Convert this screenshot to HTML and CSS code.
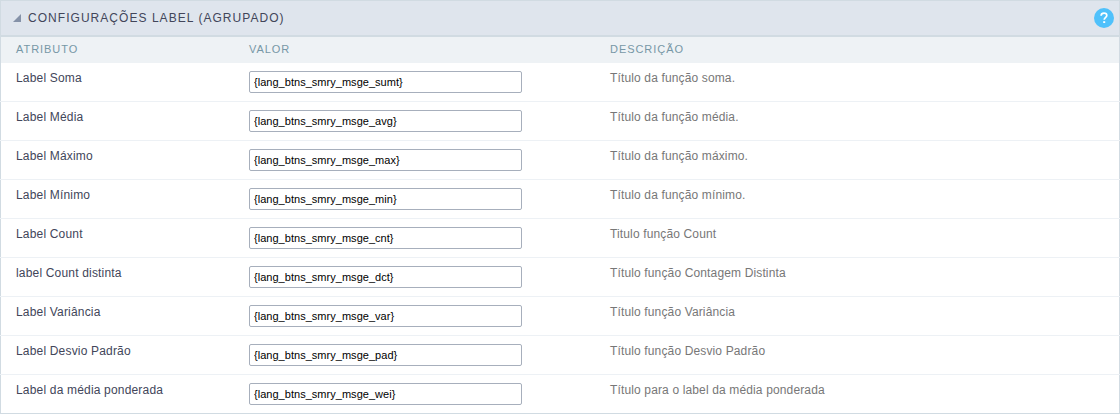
FILE: index.html
```html
<!DOCTYPE html>
<html lang="pt-BR">
<head>
<meta charset="utf-8">
<title>Configurações Label</title>
<link rel="stylesheet" href="styles.css">
</head>
<body>
<section class="panel">
  <header class="panel-head">
    <svg class="toggle" width="8" height="8" viewBox="0 0 8 8"><path d="M8 0V8H0Z"/></svg>
    <h1 class="title">CONFIGURAÇÕES LABEL (AGRUPADO)</h1>
    <svg class="help" width="20" height="20" viewBox="0 0 20 20"><circle cx="10" cy="10" r="10" fill="#4fc1fb"/><path d="M7.1 7.7C7.2 5.9 8.4 5.2 10 5.2C11.7 5.2 12.8 6.1 12.8 7.5C12.8 9.3 10.2 9.4 10.2 11.8" fill="none" stroke="#fff" stroke-width="1.7"/><rect x="9.2" y="13.2" width="2" height="1.8" fill="#fff"/></svg>
  </header>
  <div class="row columns"><span>ATRIBUTO</span><span>VALOR</span><span>DESCRIÇÃO</span></div>
  <div class="row"><label>Label Soma</label><input class="field" value="{lang_btns_smry_msge_sumt}"><span class="desc">Título da função soma.</span></div>
  <div class="row"><label>Label Média</label><input class="field" value="{lang_btns_smry_msge_avg}"><span class="desc">Título da função média.</span></div>
  <div class="row"><label>Label Máximo</label><input class="field" value="{lang_btns_smry_msge_max}"><span class="desc">Título da função máximo.</span></div>
  <div class="row"><label>Label Mínimo</label><input class="field" value="{lang_btns_smry_msge_min}"><span class="desc">Título da função mínimo.</span></div>
  <div class="row"><label>Label Count</label><input class="field" value="{lang_btns_smry_msge_cnt}"><span class="desc">Titulo função Count</span></div>
  <div class="row"><label>label Count distinta</label><input class="field" value="{lang_btns_smry_msge_dct}"><span class="desc">Título função Contagem Distinta</span></div>
  <div class="row"><label>Label Variância</label><input class="field" value="{lang_btns_smry_msge_var}"><span class="desc">Título função Variância</span></div>
  <div class="row"><label>Label Desvio Padrão</label><input class="field" value="{lang_btns_smry_msge_pad}"><span class="desc">Título função Desvio Padrão</span></div>
  <div class="row"><label>Label da média ponderada</label><input class="field" value="{lang_btns_smry_msge_wei}"><span class="desc">Título para o label da média ponderada</span></div>
</section>
</body>
</html>
```
FILE: styles.css
```css
* { box-sizing: border-box; }
body {
  margin: 0;
  background: #fff;
  font-family: "Liberation Sans", Arial, sans-serif;
  font-size: 12px;
  letter-spacing: 0.18px;
  color: #42465a;
}
.panel { height: 414px; border: 1px solid #d1dbe2; }
.panel-head {
  display: flex;
  align-items: center;
  height: 36px;
  padding: 0 5px 0 12px;
  background: #dfe5ed;
  border-bottom: 2px solid #d1dbe2;
}
.toggle { fill: #8592a8; margin-right: 7px; }
.title { flex: 1; margin: 0; font-size: 12px; font-weight: 400; letter-spacing: 1.04px; }
.row {
  display: grid;
  grid-template-columns: 233px 361px 1fr;
  align-items: start;
  height: 39px;
  margin: 0 -1px;
  padding: 8px 16px 0;
  line-height: 14px;
  border-bottom: 1px solid #edf1f5;
}
.row:last-child { border-bottom: 0; height: 38px; }
.columns {
  height: 26px;
  margin: 0;
  padding: 5px 15px 0;
  font-size: 11px;
  letter-spacing: 0.95px;
  color: #7797a6;
  background: #eef2f5;
  border-bottom: 0;
}
.field {
  width: 273px;
  height: 22px;
  padding: 0 4px 1px;
  border: 1px solid #a7afbc;
  border-radius: 2px;
  font: 11px "Liberation Sans", Arial, sans-serif;
  letter-spacing: 0.03px;
  color: #000;
  background: #fff;
}
.desc { color: #777; letter-spacing: 0.14px; }
```
